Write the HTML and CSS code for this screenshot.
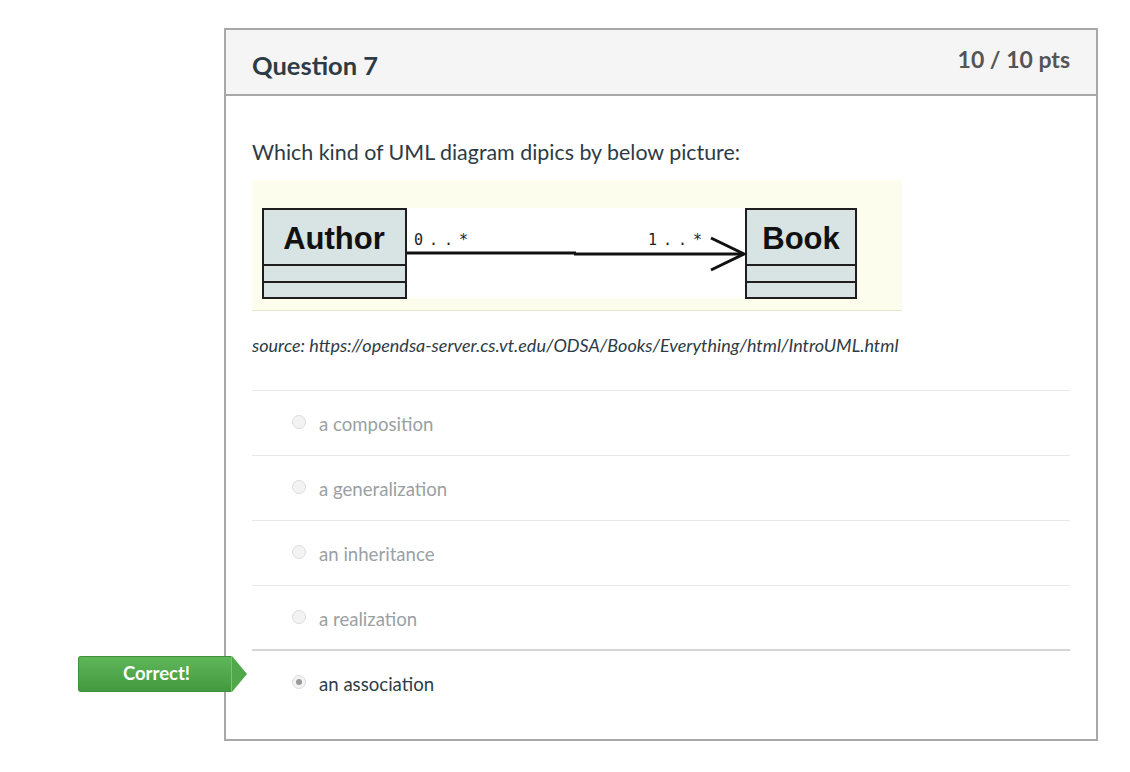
FILE: index.html
```html
<!DOCTYPE html>
<html>
<head>
<meta charset="utf-8">
<link rel="stylesheet" href="styles.css">
</head>
<body>
<div class="card">
  <div class="card-header">
    <h2 class="title">Question 7</h2>
    <div class="pts">10 / 10 pts</div>
  </div>
  <div class="card-body">
    <p class="question">Which kind of UML diagram dipics by below picture:</p>
    <div class="figure">
      <svg width="650" height="130" viewBox="0 0 650 130" xmlns="http://www.w3.org/2000/svg">
        <rect x="0" y="0" width="650" height="130" fill="#fdfdee"/>
        <rect x="154" y="28" width="340" height="90" fill="#ffffff"/>
        <rect x="11" y="29" width="143" height="89" fill="#d8e3e3" stroke="#1e1e1e" stroke-width="2"/>
        <line x1="11" y1="85" x2="154" y2="85" stroke="#1e1e1e" stroke-width="2"/>
        <line x1="11" y1="102" x2="154" y2="102" stroke="#1e1e1e" stroke-width="2"/>
        <text x="82" y="69" text-anchor="middle" class="cls">Author</text>
        <rect x="494" y="29" width="110" height="89" fill="#d8e3e3" stroke="#1e1e1e" stroke-width="2"/>
        <line x1="494" y1="85" x2="604" y2="85" stroke="#1e1e1e" stroke-width="2"/>
        <line x1="494" y1="102" x2="604" y2="102" stroke="#1e1e1e" stroke-width="2"/>
        <text x="549" y="69" text-anchor="middle" class="cls">Book</text>
        <line x1="155" y1="73" x2="324" y2="73" stroke="#111" stroke-width="2.8"/>
        <line x1="322" y1="74" x2="492" y2="74" stroke="#111" stroke-width="2.8"/>
        <polyline points="459,58 492,74 459,90" fill="none" stroke="#111" stroke-width="3"/>
        <text x="162" y="65" class="mult">0..*</text>
        <text x="396" y="65" class="mult">1..*</text>
      </svg>
    </div>
    <p class="source">source: https://opendsa-server.cs.vt.edu/ODSA/Books/Everything/html/IntroUML.html</p>
    <div class="answers">
      <div class="answer"><span class="radio"></span><span class="label">a composition</span></div>
      <div class="answer"><span class="radio"></span><span class="label">a generalization</span></div>
      <div class="answer"><span class="radio"></span><span class="label">an inheritance</span></div>
      <div class="answer"><span class="radio"></span><span class="label">a realization</span></div>
      <div class="answer selected">
        <span class="badge">Correct!</span>
        <span class="radio checked"></span><span class="label">an association</span>
      </div>
    </div>
  </div>
</div>
</body>
</html>
```
FILE: styles.css
```css
* { box-sizing: border-box; }
html, body { margin: 0; padding: 0; background: #fff; }
body {
  font-family: Lato, "Open Sans", "Liberation Sans", sans-serif;
  color: #2d3b45;
  padding-top: 28px;
}
.card {
  margin-left: 224px;
  width: 874px;
  border: 2px solid #a8a8a8;
  background: #fff;
}
.card-header {
  display: flex;
  justify-content: space-between;
  align-items: flex-start;
  height: 66px;
  padding: 0 26px;
  background: #f5f5f5;
  border-bottom: 2px solid #a8a8a8;
}
.title {
  margin: 20px 0 0 0;
  font-size: 25.5px;
  line-height: 30px;
  font-weight: 700;
  color: #2d3b45;
}
.pts {
  margin-top: 16px;
  font-size: 23px;
  line-height: 27px;
  font-weight: 700;
  color: #555;
}
.card-body {
  padding: 44px 26px 24px 26px;
}
.question {
  margin: 0;
  font-size: 21.4px;
  line-height: 24px;
}
.figure {
  margin-top: 16px;
  width: 650px;
  height: 131px;
  border-bottom: 1px solid #e6e6cc;
}
.figure svg { display: block; }
.cls {
  font-family: "Liberation Sans", Arial, sans-serif;
  font-weight: 700;
  font-size: 31px;
  fill: #111;
}
.mult {
  font-family: "DejaVu Sans Mono", "Liberation Mono", monospace;
  font-size: 15px;
  letter-spacing: 6px;
  fill: #222;
}
.source {
  margin: 24px 0 0 0;
  font-size: 18px;
  line-height: 20px;
  font-style: italic;
}
.answers {
  margin-top: 35px;
}
.answer {
  position: relative;
  display: flex;
  align-items: center;
  height: 65px;
  padding: 2px 0 0 40px;
  border-top: 1px solid #e8e8e8;
}
.answer.selected {
  border-top: 2px solid #d6d6d6;
  margin-top: -1px;
  height: 66px;
}
.radio {
  width: 14px;
  height: 14px;
  border-radius: 50%;
  border: 1px solid #dcdcdc;
  background: #f3f3f3;
  margin-right: 13px;
  flex: none;
  display: flex;
  align-items: center;
  justify-content: center;
  margin-top: -4px;
}
.radio.checked::after {
  content: "";
  width: 6px;
  height: 6px;
  border-radius: 50%;
  background: #9a9a9a;
}
.label {
  font-size: 18.6px;
  line-height: 22px;
  color: #9aa0a4;
}
.selected .label { color: #2d3b45; }
.badge {
  position: absolute;
  left: -174px;
  top: 5px;
  width: 154px;
  height: 36px;
  padding-left: 3px;
  background: linear-gradient(#5fb75a, #43993f);
  border: 1px solid #3f8f3b;
  border-right: 1px solid #7cc474;
  border-radius: 3px 0 0 3px;
  color: #fff;
  font-size: 18.5px;
  font-weight: 700;
  line-height: 32px;
  text-align: center;
}
.badge::after {
  content: "";
  position: absolute;
  right: -16px;
  top: -1px;
  border-top: 18px solid transparent;
  border-bottom: 18px solid transparent;
  border-left: 15px solid #4fa84a;
}
```
